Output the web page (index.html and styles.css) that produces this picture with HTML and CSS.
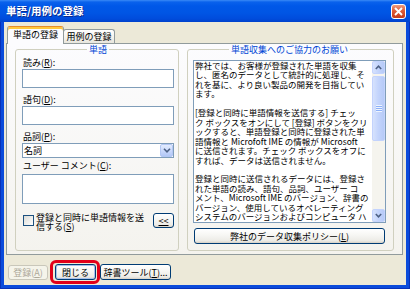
FILE: index.html
```html
<!DOCTYPE html>
<html lang="ja">
<head>
<meta charset="utf-8">
<title>単語/用例の登録</title>
<link rel="stylesheet" href="styles.css">
</head>
<body>
<div class="window">
  <div class="titlebar">
    <span class="title">単語/用例の登録</span>
    <span class="close"><svg width="9" height="9" viewBox="0 0 9 9"><path d="M1 1L8 8M8 1L1 8" stroke="#fff" stroke-width="1.9" fill="none"/></svg></span>
  </div>
  <div class="client">
    <div class="tabs">
      <div class="tab active">単語の登録</div>
      <div class="tab other">用例の登録</div>
    </div>
    <div class="panel">
      <fieldset class="group left">
        <legend>単語</legend>
        <div class="label first">読み(<u>R</u>):</div>
        <div class="field"></div>
        <div class="label">語句(<u>D</u>):</div>
        <div class="field"></div>
        <div class="label">品詞(<u>P</u>):</div>
        <div class="select">
          <span class="select-text">名詞</span>
          <span class="dd"><svg width="8" height="5" viewBox="0 0 8 5"><path d="M1 0.8L4 3.8L7 0.8" stroke="#4D6185" stroke-width="1.6" fill="none"/></svg></span>
        </div>
        <div class="label tight">ユーザー コメント(<u>C</u>):</div>
        <div class="field area"></div>
        <div class="checkrow">
          <span class="check"></span>
          <span class="checklabel">登録と同時に単語情報を送<br>信する(<u>S</u>)</span>
          <span class="btn small"><u>&lt;&lt;</u></span>
        </div>
      </fieldset>
      <fieldset class="group right">
        <legend>単語収集へのご協力のお願い</legend>
        <div class="textbox">
          <div class="textbody">
            <p>弊社では、お客様が登録された単語を収集<br>し、匿名のデータとして統計的に処理し、そ<br>れを基に、より良い製品の開発を目指してい<br>ます。</p>
            <p>[登録と同時に単語情報を送信する] チェッ<br>ク ボックスをオンにして [登録] ボタンをクリ<br>ックすると、単語登録と同時に登録された単<br>語情報と Microfoft IME の情報が Microsoft<br>に送信されます。チェック ボックスをオフに<br>すれば、データは送信されません。</p>
            <p>登録と同時に送信されるデータには、登録さ<br>れた単語の読み、語句、品詞、ユーザー コ<br>メント、Microsoft IME のバージョン、辞書の<br>バージョン、使用しているオペレーティング<br>システムのバージョンおよびコンピュータ ハ</p>
          </div>
          <div class="scrollbar">
            <span class="sbtn"><svg width="7" height="5" viewBox="0 0 7 5"><path d="M0.8 4L3.5 1.2L6.2 4" stroke="#4D6185" stroke-width="1.6" fill="none"/></svg></span>
            <div class="track">
              <span class="thumb"><span class="grip"></span></span>
            </div>
            <span class="sbtn"><svg width="7" height="5" viewBox="0 0 7 5"><path d="M0.8 1L3.5 3.8L6.2 1" stroke="#4D6185" stroke-width="1.6" fill="none"/></svg></span>
          </div>
        </div>
        <div class="btn policy">弊社のデータ収集ポリシー(<u>L</u>)</div>
      </fieldset>
    </div>
    <div class="actions">
      <span class="btn disabled reg">登録(<u>A</u>)</span>
      <span class="highlight"><span class="btn default closebtn">閉じる</span></span>
      <span class="btn tool">辞書ツール(<u>T</u>)...</span>
    </div>
  </div>
</div>
</body>
</html>
```

FILE: styles.css
```css
html, body {
  margin: 0;
  padding: 0;
  background: #ffffff;
}

.window {
  width: 410px;
  height: 289px;
  display: flex;
  flex-direction: column;
  background: #0A4BDB;
  box-shadow: inset 1px 0 #0831B8, inset -1px 0 #0831B8, inset 0 -1px #0831B8;
  font-family: "Noto Sans CJK JP", "Liberation Sans", sans-serif;
  font-size: 9px;
  color: #000;
  overflow: hidden;
}

.titlebar {
  flex: none;
  height: 22px;
  box-sizing: border-box;
  display: flex;
  align-items: center;
  padding: 0 4px 0 6px;
  background: linear-gradient(to bottom, #3A8AF6 0px, #0A62EC 2px, #0058E8 6px, #0055E4 60%, #004CDC 85%, #0042CC 100%);
}

.title {
  color: #ffffff;
  font-weight: bold;
  font-size: 10.5px;
  line-height: 12px;
  text-shadow: 1px 1px 0 #0A2A8C;
}

.close {
  margin-left: auto;
  width: 15px;
  height: 15px;
  box-sizing: border-box;
  border: 1px solid #ffffff;
  border-radius: 3px;
  background: linear-gradient(to bottom, #EE9C80 0%, #E0613C 40%, #CF4522 80%, #C23C1C 100%);
  display: flex;
  align-items: center;
  justify-content: center;
}

.client {
  flex: 1;
  margin: 0 4px 4px;
  padding: 4px 0 1px;
  background: #ECE9D8;
  display: flex;
  flex-direction: column;
}

.tabs {
  display: flex;
  align-items: flex-end;
  height: 18px;
  margin: 0 0 -1px 3px;
}

.tab {
  box-sizing: border-box;
  border: 1px solid #919B9C;
  border-bottom: none;
  border-radius: 3px 3px 0 0;
  text-align: center;
  white-space: nowrap;
}

.tab.active {
  position: relative;
  z-index: 1;
  width: 57px;
  height: 18px;
  line-height: 16px;
  background: #FCFCFE;
  border-top-color: #E68B2C;
  box-shadow: inset 0 2px 0 #FFC83C;
}

.tab.other {
  width: 52px;
  height: 14px;
  line-height: 13px;
  margin: 0 0 1px -1px;
  background: linear-gradient(to bottom, #FFFFFF, #F3F2EC 60%, #E8E6DD);
}

.panel {
  box-sizing: border-box;
  width: 397px;
  height: 212px;
  margin: 0 3px 0 2px;
  border: 1px solid #919B9C;
  background: linear-gradient(to bottom, #FCFCFE, #F4F3EE);
  display: grid;
  grid-template-columns: 164px 207px;
  column-gap: 8px;
  padding: 0 8px 3px;
}

.group {
  margin: 0;
  min-width: 0;
  border: 1px solid #D0D0BF;
  border-radius: 3px;
}

.group.left {
  padding: 0 4px 0 6px;
}

.group.right {
  padding: 0 7px 0 5px;
}

legend {
  margin: 0 auto;
  padding: 0 2px;
  color: #0046D5;
  font-size: 9px;
  line-height: 11px;
  white-space: nowrap;
}

.label {
  height: 11px;
  line-height: 11px;
  margin: 6px 0 1px 1px;
  white-space: nowrap;
}

.label.first {
  margin-top: 2px;
}

.label.tight {
  margin: 2px 0 3px 1px;
}

.field {
  height: 19px;
  box-sizing: border-box;
  border: 1px solid #7F9DB9;
  background: #ffffff;
}

.field.area {
  height: 30px;
}

.select {
  height: 15px;
  box-sizing: border-box;
  border: 1px solid #7F9DB9;
  background: #ffffff;
  display: flex;
  align-items: center;
}

.select-text {
  padding-left: 1px;
  line-height: 11px;
}

.dd {
  margin-left: auto;
  width: 13px;
  height: 13px;
  box-sizing: border-box;
  border: 1px solid #B3C7F4;
  border-radius: 2px;
  background: linear-gradient(to bottom, #E3ECFE, #C6D6FB 60%, #B2C7F6);
  display: flex;
  align-items: center;
  justify-content: center;
}

.checkrow {
  display: flex;
  align-items: flex-start;
  margin-top: 9px;
}

.check {
  flex: none;
  width: 11px;
  height: 11px;
  box-sizing: border-box;
  margin: 2px 2px 0 1px;
  border: 1px solid #1C5180;
  background: linear-gradient(135deg, #DCDCD7, #FFFFFF);
}

.checklabel {
  line-height: 9.4px;
  white-space: nowrap;
}

.btn {
  box-sizing: border-box;
  border: 1px solid #003C74;
  border-radius: 3px;
  background: linear-gradient(to bottom, #FFFFFF 0%, #F6F6F3 45%, #ECEBE6 85%, #D6D0C5 100%);
  display: flex;
  align-items: center;
  justify-content: center;
  white-space: nowrap;
  line-height: 11px;
}

.btn.small {
  margin-left: auto;
  width: 21px;
  height: 15px;
}

.textbox {
  margin-top: 5px;
  height: 163px;
  box-sizing: border-box;
  border: 1px solid #7F9DB9;
  background: #ffffff;
  display: flex;
}

.textbody {
  flex: 1;
  min-width: 0;
  overflow: hidden;
  padding-left: 1px;
  font-size: 8.5px;
  line-height: 9.45px;
  white-space: nowrap;
}

.textbody p {
  margin: 0 0 9.45px;
}

.scrollbar {
  flex: none;
  width: 13px;
  display: flex;
  flex-direction: column;
  background: #F5F4EE;
}

.sbtn, .thumb {
  box-sizing: border-box;
  border: 1px solid #C3D3FD;
  border-radius: 2px;
  background: linear-gradient(to right, #D6E2FD, #C3D4FC 50%, #B6CAF7);
}

.sbtn {
  flex: none;
  height: 13px;
  display: flex;
  align-items: center;
  justify-content: center;
}

.track {
  flex: 1;
  padding-top: 2px;
}

.thumb {
  height: 65px;
  display: flex;
  align-items: center;
  justify-content: center;
}

.grip {
  width: 6px;
  height: 7px;
  background: repeating-linear-gradient(to bottom, #EEF4FE 0, #EEF4FE 1px, #8CB0F8 1px, #8CB0F8 2px);
}

.btn.policy {
  margin: 5px 1px 0;
  height: 16px;
}

.actions {
  display: flex;
  align-items: center;
  height: 24px;
  margin-top: 5px;
  padding-left: 4px;
}

.btn.reg {
  width: 40px;
  height: 15px;
}

.btn.disabled {
  border-color: #C9C7BA;
  color: #ACA899;
  background: #F5F4EA;
}

.highlight {
  display: flex;
  margin-left: 2px;
  padding: 1px 1px 1px 2px;
  border: 3px solid #E2001A;
  border-radius: 6px;
}

.btn.closebtn {
  width: 41px;
  height: 16px;
}

.btn.default {
  box-shadow: inset 0 0 0 1px #A8C1EC;
}

.btn.tool {
  width: 71px;
  height: 16px;
}
```
